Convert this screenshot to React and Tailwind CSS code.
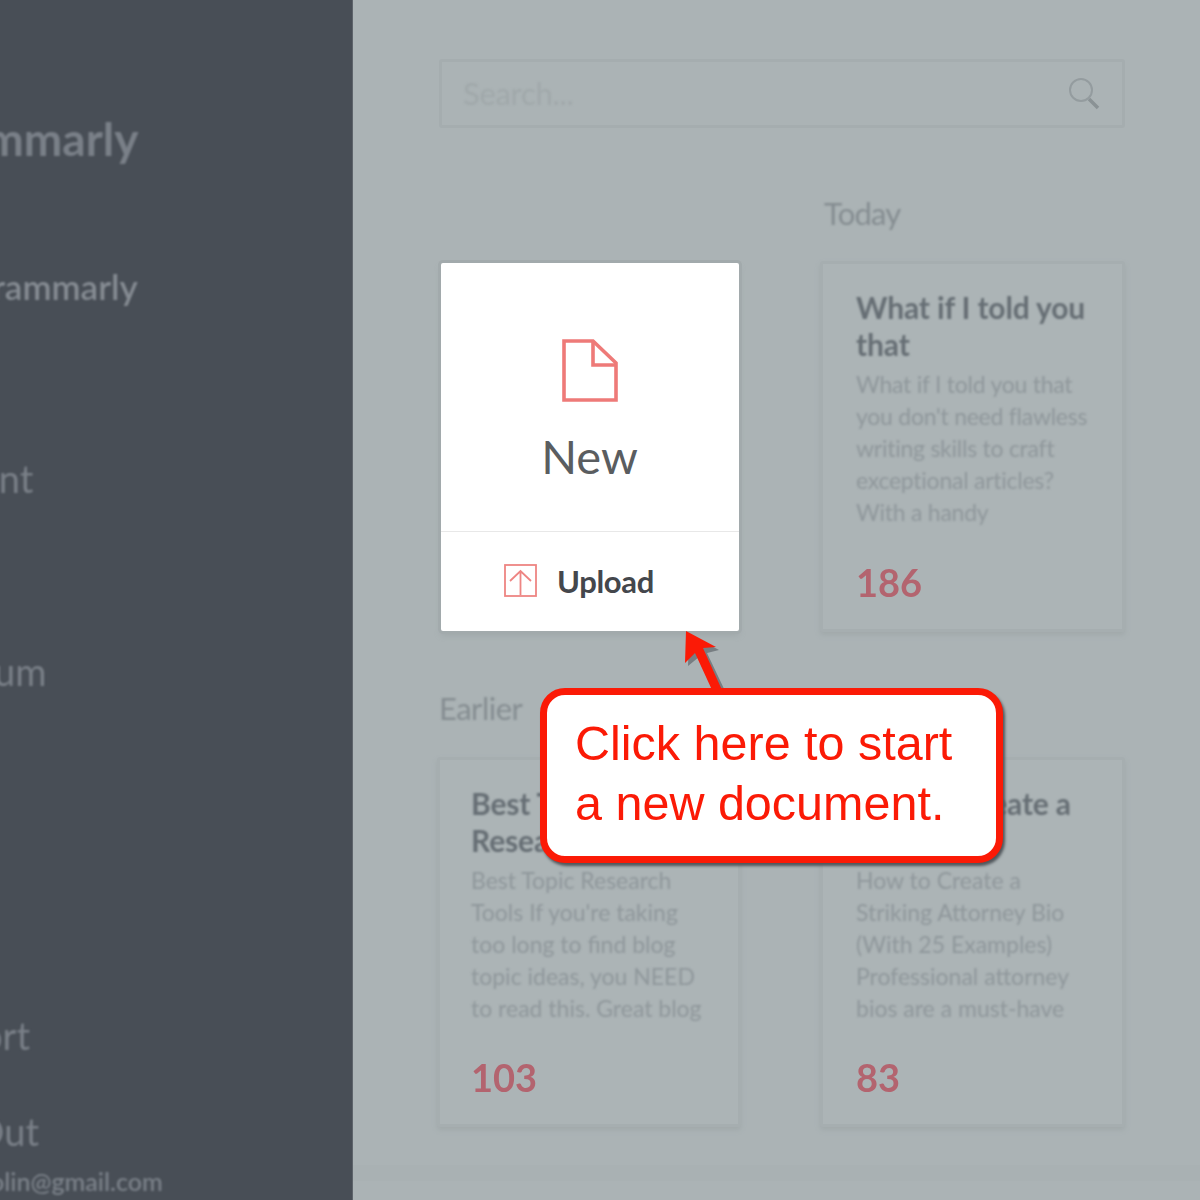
import React from "react";

const lato = { fontFamily: "Lato, 'Open Sans', sans-serif" };

function DocCard({ title, body, count, className = "", bodyClass = "" }) {
  return (
    <div className={`rounded-[3px] bg-[#acb4b6] border-[3px] border-[#a6aeb0] shadow-[0_3px_5px_#a1a9ab] pr-[20px] pt-[25px] flex flex-col ${className}`}>
      <div className="blur-[1px]">
        <div className="text-[30px] leading-[37px] font-bold text-[#666e74] tracking-[-0.15px] whitespace-nowrap">{title}</div>
        <div className={`mt-[5px] text-[23px] leading-[32px] text-[#8f979b] whitespace-nowrap ${bodyClass}`}>{body}</div>
      </div>
      <div className="mt-auto mb-[25px] text-[38px] leading-[44px] font-bold text-[#b3646f] blur-[0.7px]">{count}</div>
    </div>
  );
}

function SideItem({ children, className }) {
  return <div className={`whitespace-nowrap text-[#7a8088] blur-[1px] ${className}`}>{children}</div>;
}

export default function App() {
  return (
    <div style={lato} className="relative w-[1200px] h-[1200px] overflow-hidden flex bg-[#abb3b5]">
      <aside className="w-[353px] h-[1200px] shrink-0 bg-[#484e56] border-r border-[#5e646b] overflow-hidden flex flex-col">
        <SideItem className="mt-[113px] ml-[-88px] text-[46px] leading-[52px] font-bold text-[#6d737b]">Grammarly</SideItem>
        <SideItem className="mt-[98px] ml-[-33px] text-[35px] leading-[46px] font-semibold text-[#868c93]">Grammarly</SideItem>
        <SideItem className="mt-[146px] ml-[-142px] text-[38px] leading-[46px]">Document</SideItem>
        <SideItem className="mt-[147px] ml-[-102px] text-[38px] leading-[46px]">Premium</SideItem>
        <SideItem className="mt-[318px] ml-[-103px] text-[38px] leading-[46px]">Support</SideItem>
        <SideItem className="mt-[50px] ml-[-95px] text-[38px] leading-[46px]">Log Out</SideItem>
        <SideItem className="mt-[11px] ml-[-36px] text-[25px] leading-[32px] font-semibold">dcolin@gmail.com</SideItem>
      </aside>

      <main className="flex-1 pl-[86px] pr-[77px] pt-[59px]">
        <div className="h-[69px] flex items-center justify-between rounded-[3px] border-[3px] border-[#a5adaf] pl-[21px] pr-[20px]">
          <span className="text-[31px] text-[#a0a8aa] blur-[1px] tracking-[-0.3px]">Search...</span>
          <svg width="36" height="36" viewBox="0 0 36 36" fill="none" className="blur-[0.6px]">
            <circle cx="15" cy="14" r="11" stroke="#949c9f" strokeWidth="2" />
            <path d="M23 23 L32 32" stroke="#8a9295" strokeWidth="3.5" />
          </svg>
        </div>

        <div className="mt-[64px] grid grid-cols-[299px_303px] gap-x-[82px] pl-[2px]">
          <div />
          <div className="h-[39px] ml-[2px] text-[31px] leading-[42px] text-[#858d91] blur-[0.8px] tracking-[-0.8px]">Today</div>
          <div className="mt-[32px] w-[298px] h-[368px] bg-white rounded-[2px] shadow-[0_0_0_3px_#a2aaac,0_4px_6px_#9ea6a8] flex flex-col">
            <div className="h-[269px] flex flex-col items-center border-b border-[#e8e8e8] pt-[76px] pr-[1px]">
              <svg width="56" height="63" viewBox="0 0 56 63" fill="none" stroke="#ee7a78" strokeWidth="3.6">
                <path d="M2 2 H31 L54 24 V61 H2 Z" />
                <path d="M31 2 V26 H54" />
              </svg>
              <div className="mt-[26px] text-[47px] leading-[56px] text-[#5a5d60]">New</div>
            </div>
            <div className="flex-1 flex items-center justify-center gap-[20px] pr-[22px] pb-[2px]">
              <svg width="33" height="33" viewBox="0 0 33 33" fill="none" stroke="#ee8583" strokeWidth="1.8">
                <rect x="1" y="1" width="31" height="31" />
                <path d="M16.5 31 V7 M6 17 L16.5 7 L27 17" />
              </svg>
              <span className="text-[31px] leading-[36px] font-bold text-[#44474c] tracking-[-0.3px]">Upload</span>
            </div>
          </div>
          <DocCard
            className="mt-[30px] h-[371px] ml-[-2px] w-[305px] pl-[33px]"
            bodyClass="tracking-[-0.25px]"
            title={<>What if I told you<br />that</>}
            body={<>What if I told you that<br />you don't need flawless<br />writing skills to craft<br />exceptional articles?<br />With a handy</>}
            count="186"
          />
          <div className="col-span-2 mt-[56px] h-[38px] text-[31px] leading-[40px] text-[#858d91] blur-[0.8px] tracking-[-0.5px] ml-[-2px]">Earlier</div>
          <DocCard
            className="mt-[31px] h-[370px] ml-[-4px] w-[304px] pl-[31px]"
            bodyClass="tracking-[0px]"
            title={<>Best Topic<br />Research Tools</>}
            body={<>Best Topic Research<br />Tools If you're taking<br />too long to find blog<br />topic ideas, you NEED<br />to read this. Great blog</>}
            count="103"
          />
          <DocCard
            className="mt-[31px] h-[370px] ml-[-2px] w-[305px] pl-[33px]"
            bodyClass="tracking-[0px]"
            title={<>How to Create a<br />Striking</>}
            body={<>How to Create a<br />Striking Attorney Bio<br />(With 25 Examples)<br />Professional attorney<br />bios are a must-have</>}
            count="83"
          />
        </div>
        <div className="mt-[38px] h-[16px] ml-[-86px] mr-[-77px] bg-[#a9b1b3]" />
      </main>

      <svg className="absolute left-[670px] top-[620px]" width="70" height="80" viewBox="0 0 70 80" fill="none">
        <path d="M16 11 L15 43 L26 34 L44 70 L53 70 L34 30 L46 27 Z" fill="#4c5257" opacity="0.55" transform="translate(3,3)" />
        <path d="M16 11 L15 43 L25 33 L42 70 L52 70 L33 28 L46 27 Z" fill="#fb1a06" />
      </svg>

      <div
        style={{ fontFamily: "'Liberation Sans', Arial, sans-serif" }}
        className="absolute left-[540px] top-[688px] w-[463px] h-[175px] rounded-[25px] border-[7px] border-[#fb1a06] bg-white shadow-[2px_3px_3px_#50565b] pl-[28px] pt-[18px] text-[48.5px] leading-[60px] text-[#fb1a06] whitespace-nowrap"
      >
        Click here to start
        <br />
        a new document.
      </div>
    </div>
  );
}
